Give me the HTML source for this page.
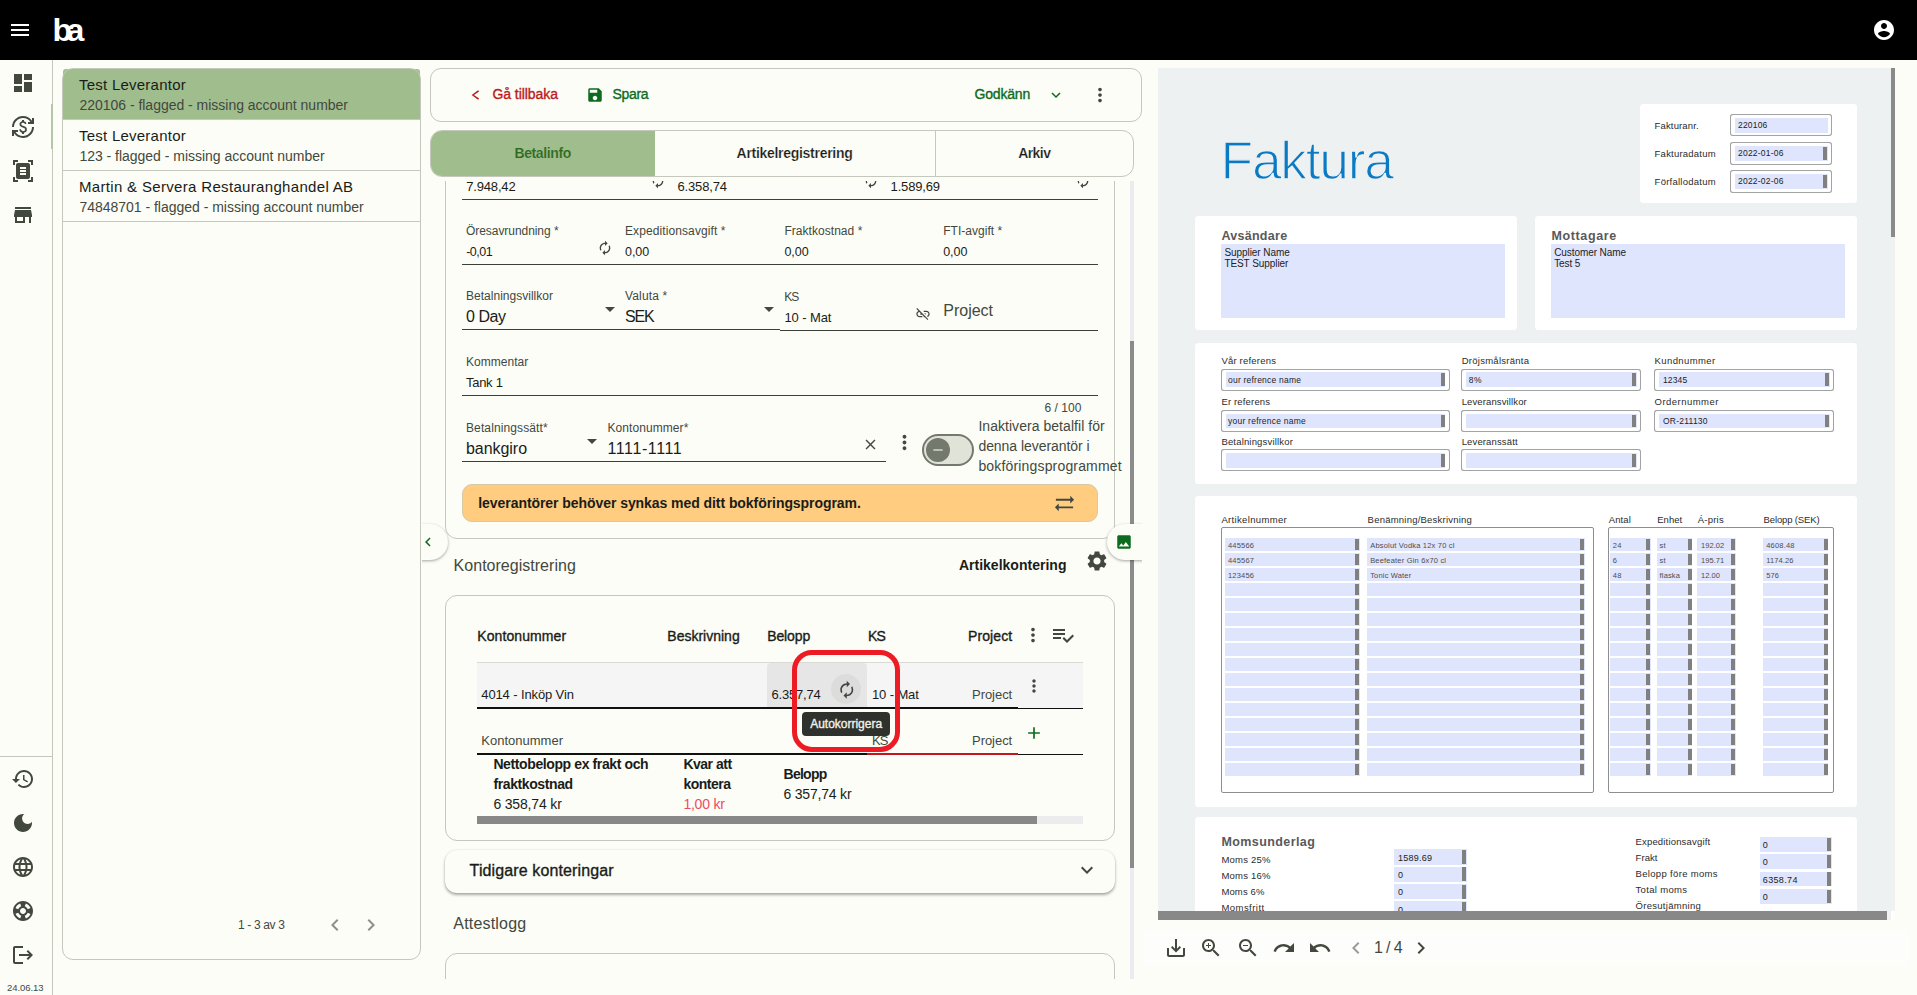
<!DOCTYPE html>
<html lang="sv"><head><meta charset="utf-8"><title>Faktura</title>
<style>
html,body{margin:0;padding:0}
body{width:1917px;height:995px;position:relative;overflow:hidden;background:#fcfdf7;font-family:"Liberation Sans",sans-serif}
body div,body span.t,body svg.i{position:absolute;box-sizing:border-box}
span.t{white-space:nowrap;display:block}
</style></head>
<body>
<div style="left:422px;top:181px;width:720px;height:798px;overflow:hidden"><div style="left:-422px;top:-181px;width:1917px;height:995px">
<div style="left:445px;top:120px;width:670px;height:418.5px;border:1px solid #c5c8bd;border-radius:12px;"></div>
<span class="t" id="t1" style="left:466.2px;top:180.30px;font-size:13px;line-height:13px;color:#1a1c18;letter-spacing:-0.164px;">7.948,42</span>
<span class="t" id="t2" style="left:677.5px;top:180.30px;font-size:13px;line-height:13px;color:#1a1c18;letter-spacing:-0.164px;">6.358,74</span>
<span class="t" id="t3" style="left:890.6px;top:180.30px;font-size:13px;line-height:13px;color:#1a1c18;letter-spacing:-0.164px;">1.589,69</span>
<svg class="i" style="left:650.4px;top:173.3px;" width="16" height="16" viewBox="0 0 24 24"><path fill="#43483e" d="M12 6v3l4-4-4-4v3c-4.42 0-8 3.58-8 8 0 1.57.46 3.03 1.24 4.26L6.7 14.8c-.45-.83-.7-1.79-.7-2.8 0-3.31 2.69-6 6-6zm6.76 1.74L17.3 9.2c.44.84.7 1.79.7 2.8 0 3.31-2.69 6-6 6v-3l-4 4 4 4v-3c4.42 0 8-3.58 8-8 0-1.57-.46-3.03-1.24-4.26z"/></svg>
<svg class="i" style="left:862.5px;top:173.3px;" width="16" height="16" viewBox="0 0 24 24"><path fill="#43483e" d="M12 6v3l4-4-4-4v3c-4.42 0-8 3.58-8 8 0 1.57.46 3.03 1.24 4.26L6.7 14.8c-.45-.83-.7-1.79-.7-2.8 0-3.31 2.69-6 6-6zm6.76 1.74L17.3 9.2c.44.84.7 1.79.7 2.8 0 3.31-2.69 6-6 6v-3l-4 4 4 4v-3c4.42 0 8-3.58 8-8 0-1.57-.46-3.03-1.24-4.26z"/></svg>
<svg class="i" style="left:1074.6px;top:173.3px;" width="16" height="16" viewBox="0 0 24 24"><path fill="#43483e" d="M12 6v3l4-4-4-4v3c-4.42 0-8 3.58-8 8 0 1.57.46 3.03 1.24 4.26L6.7 14.8c-.45-.83-.7-1.79-.7-2.8 0-3.31 2.69-6 6-6zm6.76 1.74L17.3 9.2c.44.84.7 1.79.7 2.8 0 3.31-2.69 6-6 6v-3l-4 4 4 4v-3c4.42 0 8-3.58 8-8 0-1.57-.46-3.03-1.24-4.26z"/></svg>
<div style="left:462px;top:199px;width:636px;height:1px;background:#3c4038;"></div>
<span class="t" id="t4" style="left:466px;top:225.14px;font-size:12px;line-height:12px;color:#43483e;letter-spacing:-0.056px;">Öresavrundning *</span>
<span class="t" id="t5" style="left:625px;top:225.14px;font-size:12px;line-height:12px;color:#43483e;letter-spacing:0.098px;">Expeditionsavgift *</span>
<span class="t" id="t6" style="left:784.4px;top:225.14px;font-size:12px;line-height:12px;color:#43483e;letter-spacing:0.045px;">Fraktkostnad *</span>
<span class="t" id="t7" style="left:943.2px;top:225.14px;font-size:12px;line-height:12px;color:#43483e;letter-spacing:0.026px;">FTI-avgift *</span>
<span class="t" id="t8" style="left:466.2px;top:246.42px;font-size:12.5px;line-height:12.5px;color:#1a1c18;letter-spacing:-0.480px;">-0,01</span>
<span class="t" id="t9" style="left:625px;top:246.42px;font-size:12.5px;line-height:12.5px;color:#1a1c18;letter-spacing:-0.036px;">0,00</span>
<span class="t" id="t10" style="left:784.4px;top:246.42px;font-size:12.5px;line-height:12.5px;color:#1a1c18;letter-spacing:-0.036px;">0,00</span>
<span class="t" id="t11" style="left:943.2px;top:246.42px;font-size:12.5px;line-height:12.5px;color:#1a1c18;letter-spacing:-0.036px;">0,00</span>
<svg class="i" style="left:597.0px;top:240.0px;" width="16" height="16" viewBox="0 0 24 24"><path fill="#43483e" d="M12 6v3l4-4-4-4v3c-4.42 0-8 3.58-8 8 0 1.57.46 3.03 1.24 4.26L6.7 14.8c-.45-.83-.7-1.79-.7-2.8 0-3.31 2.69-6 6-6zm6.76 1.74L17.3 9.2c.44.84.7 1.79.7 2.8 0 3.31-2.69 6-6 6v-3l-4 4 4 4v-3c4.42 0 8-3.58 8-8 0-1.57-.46-3.03-1.24-4.26z"/></svg>
<div style="left:462px;top:264px;width:636px;height:1px;background:#3c4038;"></div>
<span class="t" id="t12" style="left:466px;top:290.14px;font-size:12px;line-height:12px;color:#43483e;letter-spacing:0.017px;">Betalningsvillkor</span>
<span class="t" id="t13" style="left:625px;top:290.14px;font-size:12px;line-height:12px;color:#43483e;letter-spacing:0.145px;">Valuta *</span>
<span class="t" id="t14" style="left:784.3px;top:290.64px;font-size:12px;line-height:12px;color:#43483e;letter-spacing:-1.158px;">KS</span>
<span class="t" id="t15" style="left:466px;top:308.76px;font-size:16px;line-height:16px;color:#1a1c18;letter-spacing:-0.479px;">0 Day</span>
<span class="t" id="t16" style="left:625px;top:308.76px;font-size:16px;line-height:16px;color:#1a1c18;letter-spacing:-1.172px;">SEK</span>
<span class="t" id="t17" style="left:784.4px;top:311.30px;font-size:13px;line-height:13px;color:#1a1c18;letter-spacing:-0.098px;">10 - Mat</span>
<span class="t" id="t18" style="left:943.3px;top:303.36px;font-size:16px;line-height:16px;color:#43483e;letter-spacing:-0.014px;">Project</span>
<svg class="i" style="left:598.0px;top:296.5px;" width="24" height="24" viewBox="0 0 24 24"><path fill="#43483e" d="M7 10l5 5 5-5z"/></svg>
<svg class="i" style="left:756.8px;top:296.5px;" width="24" height="24" viewBox="0 0 24 24"><path fill="#43483e" d="M7 10l5 5 5-5z"/></svg>
<svg class="i" style="left:915.2px;top:305.5px;" width="16" height="16" viewBox="0 0 24 24"><path fill="#43483e" d="M17 7h-4v1.9h4c1.71 0 3.1 1.39 3.1 3.1 0 1.43-.98 2.63-2.31 2.98l1.46 1.46C20.88 15.61 22 13.95 22 12c0-2.76-2.24-5-5-5zm-1 4h-2.19l2 2H16v-2zM2 4.27l3.11 3.11C3.29 8.12 2 9.91 2 12c0 2.76 2.24 5 5 5h4v-1.9H7c-1.71 0-3.1-1.39-3.1-3.1 0-1.59 1.21-2.9 2.76-3.07L8.73 11H8v2h2.73L13 15.27V17h1.73l4.01 4L20 19.74 3.27 3 2 4.27z"/></svg>
<div style="left:462px;top:329px;width:318px;height:1px;background:#3c4038;"></div>
<div style="left:780px;top:330px;width:318px;height:1px;background:#3c4038;"></div>
<span class="t" id="t19" style="left:466px;top:356.04px;font-size:12px;line-height:12px;color:#43483e;letter-spacing:0.030px;">Kommentar</span>
<span class="t" id="t20" style="left:466px;top:376.00px;font-size:13px;line-height:13px;color:#1a1c18;letter-spacing:-0.285px;">Tank 1</span>
<div style="left:462px;top:395px;width:636px;height:1px;background:#3c4038;"></div>
<span class="t" id="t21" style="left:1044.4px;top:402.04px;font-size:12px;line-height:12px;color:#43483e;letter-spacing:0.071px;">6 / 100</span>
<span class="t" id="t22" style="left:466px;top:422.14px;font-size:12px;line-height:12px;color:#43483e;letter-spacing:0.116px;">Betalningssätt*</span>
<span class="t" id="t23" style="left:607.4px;top:422.14px;font-size:12px;line-height:12px;color:#43483e;letter-spacing:0.079px;">Kontonummer*</span>
<span class="t" id="t24" style="left:466px;top:440.86px;font-size:16px;line-height:16px;color:#1a1c18;letter-spacing:-0.047px;">bankgiro</span>
<span class="t" id="t25" style="left:607.4px;top:440.86px;font-size:16px;line-height:16px;color:#1a1c18;letter-spacing:0.623px;">1111-1111</span>
<svg class="i" style="left:580.0px;top:429.0px;" width="24" height="24" viewBox="0 0 24 24"><path fill="#43483e" d="M7 10l5 5 5-5z"/></svg>
<div style="left:462px;top:460.5px;width:424px;height:1px;background:#3c4038;"></div>
<svg class="i" style="left:862.0px;top:436.0px;" width="17" height="17" viewBox="0 0 24 24"><path fill="#43483e" d="M19 6.41L17.59 5 12 10.59 6.41 5 5 6.41 10.59 12 5 17.59 6.41 19 12 13.41 17.59 19 19 17.59 13.41 12z"/></svg>
<svg class="i" style="left:892.5px;top:430.5px;" width="23" height="23" viewBox="0 0 24 24"><path fill="#43483e" d="M12 8c1.1 0 2-.9 2-2s-.9-2-2-2-2 .9-2 2 .9 2 2 2zm0 2c-1.1 0-2 .9-2 2s.9 2 2 2 2-.9 2-2-.9-2-2-2zm0 6c-1.1 0-2 .9-2 2s.9 2 2 2 2-.9 2-2-.9-2-2-2z"/></svg>
<div style="left:922px;top:433.5px;width:52px;height:32px;border:2px solid #74796d;border-radius:16px;background:#e0e4d8;"></div>
<div style="left:926px;top:437.5px;width:24px;height:24px;border-radius:12px;background:#74796d;"></div>
<svg class="i" style="left:930.0px;top:441.5px;" width="16" height="16" viewBox="0 0 24 24"><path fill="#e0e4d8" d="M19 13H5v-2h14v2z"/></svg>
<span class="t" id="t26" style="left:978.4px;top:419.15px;font-size:14px;line-height:14px;color:#43483e;letter-spacing:0.044px;">Inaktivera betalfil för</span>
<span class="t" id="t27" style="left:978.4px;top:439.15px;font-size:14px;line-height:14px;color:#43483e;letter-spacing:-0.049px;">denna leverantör i</span>
<span class="t" id="t28" style="left:978.4px;top:459.15px;font-size:14px;line-height:14px;color:#43483e;letter-spacing:0.167px;">bokföringsprogrammet</span>
<div style="left:462px;top:484px;width:636px;height:37.5px;background:#ffcc80;border-radius:10px;border:1px solid #d8c8a4;"></div>
<span class="t" id="t29" style="left:478.3px;top:496.45px;font-size:14px;line-height:14px;color:#1a1c18;font-weight:700;letter-spacing:-0.062px;">leverantörer behöver synkas med ditt bokföringsprogram.</span>
<svg class="i" style="left:1052.5px;top:491.5px;" width="23" height="23" viewBox="0 0 24 24"><path fill="#43483e" d="M22 8l-4-4v3H3v2h15v3l4-4zM2 16l4 4v-3h15v-2H6v-3l-4 4z"/></svg>
<span class="t" id="t30" style="left:453.6px;top:558.46px;font-size:16px;line-height:16px;color:#43483e;letter-spacing:0.021px;">Kontoregistrering</span>
<span class="t" id="t31" style="left:958.9px;top:558.35px;font-size:14px;line-height:14px;color:#1a1c18;font-weight:700;letter-spacing:0.015px;">Artikelkontering</span>
<svg class="i" style="left:1085.0px;top:549.0px;" width="24" height="24" viewBox="0 0 24 24"><path fill="#43483e" d="M19.14 12.94c.04-.3.06-.61.06-.94 0-.32-.02-.64-.07-.94l2.03-1.58c.18-.14.23-.41.12-.61l-1.92-3.32c-.12-.22-.37-.29-.59-.22l-2.39.96c-.5-.38-1.03-.7-1.62-.94l-.36-2.54c-.04-.24-.24-.41-.48-.41h-3.84c-.24 0-.43.17-.47.41l-.36 2.54c-.59.24-1.13.57-1.62.94l-2.39-.96c-.22-.08-.47 0-.59.22L2.74 8.87c-.12.21-.08.47.12.61l2.03 1.58c-.05.3-.09.63-.09.94s.02.64.07.94l-2.03 1.58c-.18.14-.23.41-.12.61l1.92 3.32c.12.22.37.29.59.22l2.39-.96c.5.38 1.03.7 1.62.94l.36 2.54c.05.24.24.41.48.41h3.84c.24 0 .44-.17.47-.41l.36-2.54c.59-.24 1.13-.56 1.62-.94l2.39.96c.22.08.47 0 .59-.22l1.92-3.32c.12-.22.07-.47-.12-.61l-2.01-1.58zM12 15.6c-1.98 0-3.6-1.62-3.6-3.6s1.62-3.6 3.6-3.6 3.6 1.62 3.6 3.6-1.62 3.6-3.6 3.6z"/></svg>
<div style="left:445px;top:595px;width:670px;height:246px;border:1px solid #c5c8bd;border-radius:12px;"></div>
<span class="t" id="t32" style="left:477.3px;top:628.75px;font-size:14px;line-height:14px;color:#1a1c18;letter-spacing:0.088px;-webkit-text-stroke:0.35px currentColor;">Kontonummer</span>
<span class="t" id="t33" style="left:667.3px;top:628.75px;font-size:14px;line-height:14px;color:#1a1c18;letter-spacing:0.002px;-webkit-text-stroke:0.35px currentColor;">Beskrivning</span>
<span class="t" id="t34" style="left:767.2px;top:628.75px;font-size:14px;line-height:14px;color:#1a1c18;letter-spacing:-0.099px;-webkit-text-stroke:0.35px currentColor;">Belopp</span>
<span class="t" id="t35" style="left:868px;top:628.75px;font-size:14px;line-height:14px;color:#1a1c18;letter-spacing:-0.844px;-webkit-text-stroke:0.35px currentColor;">KS</span>
<span class="t" id="t36" style="left:968px;top:628.75px;font-size:14px;line-height:14px;color:#1a1c18;letter-spacing:0.089px;-webkit-text-stroke:0.35px currentColor;">Project</span>
<svg class="i" style="left:1022.0px;top:624.0px;" width="22" height="22" viewBox="0 0 24 24"><path fill="#43483e" d="M12 8c1.1 0 2-.9 2-2s-.9-2-2-2-2 .9-2 2 .9 2 2 2zm0 2c-1.1 0-2 .9-2 2s.9 2 2 2 2-.9 2-2-.9-2-2-2zm0 6c-1.1 0-2 .9-2 2s.9 2 2 2 2-.9 2-2-.9-2-2-2z"/></svg>
<svg class="i" style="left:1050.7px;top:623.2px;" width="24" height="24" viewBox="0 0 24 24"><path fill="#43483e" d="M14 10H2v2h12v-2zm0-4H2v2h12V6zM2 16h8v-2H2v2zm19.5-4.5L23 13l-6.99 7-4.51-4.5L13 14l3.01 3 5.49-5.5z"/></svg>
<div style="left:477px;top:662px;width:606px;height:1px;background:#d9d9d6;"></div>
<div style="left:477px;top:663px;width:606px;height:44.5px;background:#f5f5f5;"></div>
<div style="left:767px;top:663px;width:100px;height:44.5px;background:#e6e6e6;border-radius:4px 4px 0 0;"></div>
<div style="left:831px;top:674.3px;width:30px;height:30px;background:#dcdcdc;border-radius:15px;"></div>
<svg class="i" style="left:836.55px;top:679.85px;" width="19.5" height="19.5" viewBox="0 0 24 24"><path fill="#43483e" d="M12 6v3l4-4-4-4v3c-4.42 0-8 3.58-8 8 0 1.57.46 3.03 1.24 4.26L6.7 14.8c-.45-.83-.7-1.79-.7-2.8 0-3.31 2.69-6 6-6zm6.76 1.74L17.3 9.2c.44.84.7 1.79.7 2.8 0 3.31-2.69 6-6 6v-3l-4 4 4 4v-3c4.42 0 8-3.58 8-8 0-1.57-.46-3.03-1.24-4.26z"/></svg>
<span class="t" id="t37" style="left:481.3px;top:688.30px;font-size:13px;line-height:13px;color:#1a1c18;letter-spacing:-0.122px;">4014 - Inköp Vin</span>
<span class="t" id="t38" style="left:771.4px;top:688.30px;font-size:13px;line-height:13px;color:#1a1c18;letter-spacing:-0.164px;">6.357,74</span>
<span class="t" id="t39" style="left:872px;top:688.30px;font-size:13px;line-height:13px;color:#1a1c18;letter-spacing:-0.123px;">10 - Mat</span>
<span class="t" id="t40" style="left:972px;top:688.30px;font-size:13px;line-height:13px;color:#43483e;letter-spacing:-0.038px;">Project</span>
<svg class="i" style="left:1023.7px;top:676.0px;" width="20" height="20" viewBox="0 0 24 24"><path fill="#43483e" d="M12 8c1.1 0 2-.9 2-2s-.9-2-2-2-2 .9-2 2 .9 2 2 2zm0 2c-1.1 0-2 .9-2 2s.9 2 2 2 2-.9 2-2-.9-2-2-2zm0 6c-1.1 0-2 .9-2 2s.9 2 2 2 2-.9 2-2-.9-2-2-2z"/></svg>
<div style="left:477px;top:707.3px;width:541px;height:2px;background:#111;"></div>
<div style="left:1018px;top:708.3px;width:65px;height:1px;background:#111;"></div>
<span class="t" id="t41" style="left:481.3px;top:734.00px;font-size:13px;line-height:13px;color:#43483e;letter-spacing:0.004px;">Kontonummer</span>
<span class="t" id="t42" style="left:872px;top:734.00px;font-size:13px;line-height:13px;color:#43483e;letter-spacing:-0.822px;">KS</span>
<span class="t" id="t43" style="left:972px;top:734.00px;font-size:13px;line-height:13px;color:#43483e;letter-spacing:-0.038px;">Project</span>
<svg class="i" style="left:1023.7px;top:722.5px;" width="20" height="20" viewBox="0 0 24 24"><path fill="#0c6b1e" d="M19 13h-6v6h-2v-6H5v-2h6V5h2v6h6v2z"/></svg>
<div style="left:477px;top:753.3px;width:390px;height:2px;background:#111;"></div>
<div style="left:867px;top:753.3px;width:151px;height:2px;background:#c4161c;"></div>
<div style="left:1018px;top:754.3px;width:65px;height:1px;background:#111;"></div>
<span class="t" id="t44" style="left:493.4px;top:756.85px;font-size:14px;line-height:14px;color:#1a1c18;font-weight:700;letter-spacing:-0.389px;">Nettobelopp ex frakt och</span>
<span class="t" id="t45" style="left:493.4px;top:776.65px;font-size:14px;line-height:14px;color:#1a1c18;font-weight:700;letter-spacing:-0.386px;">fraktkostnad</span>
<span class="t" id="t46" style="left:493.4px;top:797.05px;font-size:14px;line-height:14px;color:#1a1c18;letter-spacing:-0.160px;">6 358,74 kr</span>
<span class="t" id="t47" style="left:683.4px;top:756.85px;font-size:14px;line-height:14px;color:#1a1c18;font-weight:700;letter-spacing:-0.493px;">Kvar att</span>
<span class="t" id="t48" style="left:683.4px;top:776.65px;font-size:14px;line-height:14px;color:#1a1c18;font-weight:700;letter-spacing:-0.483px;">kontera</span>
<span class="t" id="t49" style="left:683.4px;top:797.05px;font-size:14px;line-height:14px;color:#ee4b64;letter-spacing:-0.230px;">1,00 kr</span>
<span class="t" id="t50" style="left:783.5px;top:766.85px;font-size:14px;line-height:14px;color:#1a1c18;font-weight:700;letter-spacing:-0.726px;">Belopp</span>
<span class="t" id="t51" style="left:783.4px;top:786.95px;font-size:14px;line-height:14px;color:#1a1c18;letter-spacing:-0.188px;">6 357,74 kr</span>
<div style="left:477px;top:815.5px;width:606px;height:8px;background:#ececef;"></div>
<div style="left:477px;top:815.5px;width:560px;height:8px;background:#888;"></div>
<div style="left:802px;top:712px;width:88px;height:24px;background:#2f312c;border-radius:4px;"></div>
<span class="t" id="t52" style="left:810.2px;top:717.84px;font-size:12px;line-height:12px;color:#f1f1ea;letter-spacing:-0.011px;-webkit-text-stroke:0.35px currentColor;">Autokorrigera</span>
<div style="left:792px;top:649.8px;width:108px;height:102.6px;border:5.2px solid #ed1c24;border-radius:20px;"></div>
<div style="left:445px;top:849.5px;width:670px;height:43.5px;border-radius:12px;background:#fcfdf7;box-shadow:0 2px 3px rgba(0,0,0,.32),0 0 2px rgba(0,0,0,.12);"></div>
<span class="t" id="t53" style="left:469.6px;top:862.56px;font-size:16px;line-height:16px;color:#1a1c18;letter-spacing:0.120px;-webkit-text-stroke:0.35px currentColor;">Tidigare konteringar</span>
<svg class="i" style="left:1075.0px;top:858.0px;" width="24" height="24" viewBox="0 0 24 24"><path fill="#43483e" d="M16.59 8.59L12 13.17 7.41 8.59 6 10l6 6 6-6z"/></svg>
<span class="t" id="t54" style="left:453.3px;top:915.66px;font-size:16px;line-height:16px;color:#43483e;letter-spacing:0.194px;">Attestlogg</span>
<div style="left:445px;top:952.7px;width:670px;height:80px;border:1px solid #c5c8bd;border-radius:12px;"></div>
<div style="left:1130px;top:176px;width:4px;height:803px;background:#ebebf0;"></div>
<div style="left:1130px;top:340.5px;width:4px;height:527.5px;background:#8b8b8b;"></div>
<div style="left:400px;top:523.8px;width:47.7px;height:36.5px;border-radius:0 18.2px 18.2px 0;background:#fcfdf7;box-shadow:0 1px 3px rgba(0,0,0,.35);"></div>
<svg class="i" style="left:418.5px;top:533.0px;" width="18" height="18" viewBox="0 0 24 24"><path fill="#0c6b1e" d="M15.41 7.41L14 6l-6 6 6 6 1.41-1.41L10.83 12z"/></svg>
<div style="left:1106.9px;top:523.8px;width:50px;height:36.5px;border-radius:18.2px 0 0 18.2px;background:#fcfdf7;box-shadow:0 1px 3px rgba(0,0,0,.35);"></div>
<svg class="i" style="left:1115.2px;top:533.0px;" width="18" height="18" viewBox="0 0 24 24"><path fill="#0c6b1e" d="M21 19V5c0-1.1-.9-2-2-2H5c-1.1 0-2 .9-2 2v14c0 1.1.9 2 2 2h14c1.1 0 2-.9 2-2zM8.5 13.5l2.5 3.01L14.5 12l4.5 6H5l3.5-4.5z"/></svg>
</div></div>
<div style="left:430px;top:68px;width:712px;height:54px;border:1px solid #c5c8bd;border-radius:11px;background:#fcfdf7;"></div>
<svg class="i" style="left:466.6px;top:87.0px;" width="16" height="16" viewBox="0 0 24 24"><path fill="#ba1a1a" d="M16.6 5L18.2 6.6 10.4 12l7.8 5.4-1.6 1.6L7 12z"/></svg>
<span class="t" id="t55" style="left:492.4px;top:86.95px;font-size:14px;line-height:14px;color:#ba1a1a;letter-spacing:-0.051px;-webkit-text-stroke:0.35px currentColor;">Gå tillbaka</span>
<svg class="i" style="left:586.4px;top:86.0px;" width="18" height="18" viewBox="0 0 24 24"><path fill="#0c6b1e" d="M17 3H5c-1.11 0-2 .9-2 2v14c0 1.1.89 2 2 2h14c1.1 0 2-.9 2-2V7l-4-4zm-5 16c-1.66 0-3-1.34-3-3s1.34-3 3-3 3 1.34 3 3-1.34 3-3 3zm3-10H5V5h10v4z"/></svg>
<span class="t" id="t56" style="left:612.6px;top:86.95px;font-size:14px;line-height:14px;color:#0c6b1e;letter-spacing:-0.352px;-webkit-text-stroke:0.35px currentColor;">Spara</span>
<span class="t" id="t57" style="left:974.6px;top:86.95px;font-size:14px;line-height:14px;color:#0c6b1e;letter-spacing:-0.204px;-webkit-text-stroke:0.35px currentColor;">Godkänn</span>
<svg class="i" style="left:1047.0px;top:86.0px;" width="18" height="18" viewBox="0 0 24 24"><path fill="#0c6b1e" d="M16.59 8.59L12 13.17 7.41 8.59 6 10l6 6 6-6z"/></svg>
<svg class="i" style="left:1089.0px;top:84.0px;" width="22" height="22" viewBox="0 0 24 24"><path fill="#43483e" d="M12 8c1.1 0 2-.9 2-2s-.9-2-2-2-2 .9-2 2 .9 2 2 2zm0 2c-1.1 0-2 .9-2 2s.9 2 2 2 2-.9 2-2-.9-2-2-2zm0 6c-1.1 0-2 .9-2 2s.9 2 2 2 2-.9 2-2-.9-2-2-2z"/></svg>
<div style="left:430px;top:130px;width:704px;height:46.5px;border:1px solid #c5c8bd;border-radius:12px;background:#fcfdf7;overflow:hidden;"><div style="left:-1px;top:-1px;width:224.5px;height:47px;background:#a0bd8e"></div><div style="left:503.5px;top:0;width:1px;height:47px;background:#c5c8bd"></div></div>
<span class="t" id="t58" style="left:514.5px;top:146.15px;font-size:14px;line-height:14px;color:#2c6a1c;font-weight:700;letter-spacing:-0.399px;-webkit-text-stroke:0.2px #a0bd8e;">Betalinfo</span>
<span class="t" id="t59" style="left:736.6px;top:146.15px;font-size:14px;line-height:14px;color:#1a1c18;font-weight:700;letter-spacing:-0.293px;-webkit-text-stroke:0.2px #fcfdf7;">Artikelregistrering</span>
<span class="t" id="t60" style="left:1018.2px;top:146.15px;font-size:14px;line-height:14px;color:#1a1c18;font-weight:700;letter-spacing:-0.566px;-webkit-text-stroke:0.2px #fcfdf7;">Arkiv</span>
<div style="left:62px;top:68px;width:359px;height:892px;border-radius:11px;background:#fcfdf7;"></div>
<div style="left:63px;top:69px;width:357px;height:50px;background:#a0bd8e;border-radius:3px 3px 0 0;"></div>
<div style="left:63px;top:119px;width:357px;height:1px;background:#c5c8bd;"></div>
<div style="left:63px;top:170px;width:357px;height:1px;background:#c5c8bd;"></div>
<div style="left:63px;top:221px;width:357px;height:1px;background:#c5c8bd;"></div>
<div style="left:62px;top:68px;width:359px;height:892px;border:1px solid #c5c8bd;border-radius:11px;"></div>
<span class="t" id="t61" style="left:79px;top:77.30px;font-size:15px;line-height:15px;color:#1a1c18;letter-spacing:0.241px;">Test Leverantor</span>
<span class="t" id="t62" style="left:79.4px;top:97.85px;font-size:14px;line-height:14px;color:#43483e;letter-spacing:-0.017px;">220106 - flagged - missing account number</span>
<span class="t" id="t63" style="left:79px;top:128.30px;font-size:15px;line-height:15px;color:#1a1c18;letter-spacing:0.241px;">Test Leverantor</span>
<span class="t" id="t64" style="left:79.4px;top:148.85px;font-size:14px;line-height:14px;color:#43483e;letter-spacing:-0.019px;">123 - flagged - missing account number</span>
<span class="t" id="t65" style="left:79px;top:179.30px;font-size:15px;line-height:15px;color:#1a1c18;letter-spacing:0.326px;">Martin &amp; Servera Restauranghandel AB</span>
<span class="t" id="t66" style="left:79.4px;top:199.95px;font-size:14px;line-height:14px;color:#43483e;letter-spacing:-0.015px;">74848701 - flagged - missing account number</span>
<span class="t" id="t67" style="left:238px;top:918.84px;font-size:12px;line-height:12px;color:#43483e;letter-spacing:-0.343px;">1 - 3 av 3</span>
<svg class="i" style="left:323.0px;top:913.0px;" width="24" height="24" viewBox="0 0 24 24"><path fill="#8d9088" d="M15.41 7.41L14 6l-6 6 6 6 1.41-1.41L10.83 12z"/></svg>
<svg class="i" style="left:359.0px;top:913.0px;" width="24" height="24" viewBox="0 0 24 24"><path fill="#8d9088" d="M10 6L8.59 7.41 13.17 12l-4.58 4.59L10 18l6-6z"/></svg>
<div style="left:0px;top:60px;width:53px;height:935px;border-right:1px solid #c5c8bd;background:#fcfdf7;"></div>
<div style="left:51px;top:104px;width:2px;height:45px;background:#b5c7aa;"></div>
<svg class="i" style="left:11.0px;top:71.0px;" width="24" height="24" viewBox="0 0 24 24"><path fill="#43483e" d="M3 13h8V3H3v10zm0 8h8v-6H3v6zm10 0h8V11h-8v10zm0-18v6h8V3h-8z"/></svg>
<svg class="i" style="left:11.0px;top:115.0px;" width="24" height="24" viewBox="0 0 24 24"><path fill="#43483e" d="M12.89 11.1c-1.78-.59-2.64-.96-2.64-1.9 0-1.02 1.11-1.39 1.81-1.39 1.31 0 1.79.99 1.9 1.34l1.58-.67c-.15-.45-.82-1.92-2.54-2.24V5h-2v1.26c-2.48.56-2.49 2.86-2.49 2.96 0 2.27 2.25 2.91 3.35 3.31 1.58.56 2.28 1.07 2.28 2.03 0 1.13-1.05 1.61-1.98 1.61-1.82 0-2.34-1.87-2.4-2.09l-1.66.67c.63 2.19 2.28 2.78 2.9 2.96V19h2v-1.24c.4-.09 2.9-.59 2.9-3.22 0-1.39-.61-2.61-3.01-3.44zM3 21H1v-6h6v2H4.52c1.61 2.41 4.36 4 7.48 4 4.97 0 9-4.03 9-9h2c0 6.08-4.92 11-11 11-3.72 0-7.01-1.85-9-4.67V21zm-2-9C1 5.92 5.92 1 12 1c3.72 0 7.01 1.85 9 4.67V3h2v6h-6V7h2.48C17.87 4.59 15.12 3 12 3c-4.97 0-9 4.03-9 9H1z"/></svg>
<svg class="i" style="left:11.0px;top:159.0px;" width="24" height="24" viewBox="0 0 24 24"><path fill="#43483e" d="M7 3H4v3H2V1h5v2zm15 3V1h-5v2h3v3h2zM7 21H4v-3H2v5h5v-2zm13-3v3h-3v2h5v-5h-2zM19 18c0 1.1-.9 2-2 2H7c-1.1 0-2-.9-2-2V6c0-1.1.9-2 2-2h10c1.1 0 2 .9 2 2v12zM15 8H9v2h6V8zm0 3H9v2h6v-2zm0 3H9v2h6v-2z"/></svg>
<svg class="i" style="left:11.0px;top:203.0px;" width="24" height="24" viewBox="0 0 24 24"><path fill="#43483e" d="M20 4H4v2h16V4zm1 10v-2l-1-5H4l-1 5v2h1v6h10v-6h4v6h2v-6h1zm-9 4H6v-4h6v4z"/></svg>
<div style="left:0px;top:755.7px;width:52px;height:1px;background:#c5c8bd;"></div>
<svg class="i" style="left:11.0px;top:767.0px;" width="24" height="24" viewBox="0 0 24 24"><path fill="#43483e" d="M13 3c-4.97 0-9 4.03-9 9H1l3.89 3.89.07.14L9 12H6c0-3.87 3.13-7 7-7s7 3.13 7 7-3.13 7-7 7c-1.93 0-3.68-.79-4.94-2.06l-1.42 1.42C8.27 19.99 10.51 21 13 21c4.97 0 9-4.03 9-9s-4.03-9-9-9zm-1 5v5l4.28 2.54.72-1.21-3.5-2.08V8H12z"/></svg>
<svg class="i" style="left:11.0px;top:811.0px;" width="24" height="24" viewBox="0 0 24 24"><path fill="#43483e" d="M12 3c-4.97 0-9 4.03-9 9s4.03 9 9 9 9-4.03 9-9c0-.46-.04-.92-.1-1.36-.98 1.37-2.58 2.26-4.4 2.26-2.98 0-5.4-2.42-5.4-5.4 0-1.81.89-3.42 2.26-4.4-.44-.06-.9-.1-1.36-.1z"/></svg>
<svg class="i" style="left:11.0px;top:855.0px;" width="24" height="24" viewBox="0 0 24 24"><path fill="#43483e" d="M11.99 2C6.47 2 2 6.48 2 12s4.47 10 9.99 10C17.52 22 22 17.52 22 12S17.52 2 11.99 2zm6.93 6h-2.95c-.32-1.25-.78-2.45-1.38-3.56 1.84.63 3.37 1.91 4.33 3.56zM12 4.04c.83 1.2 1.48 2.53 1.91 3.96h-3.82c.43-1.43 1.08-2.76 1.91-3.96zM4.26 14C4.1 13.36 4 12.69 4 12s.1-1.36.26-2h3.38c-.08.66-.14 1.32-.14 2 0 .68.06 1.34.14 2H4.26zm.82 2h2.95c.32 1.25.78 2.45 1.38 3.56-1.84-.63-3.37-1.9-4.33-3.56zm2.95-8H5.08c.96-1.66 2.49-2.93 4.33-3.56C8.81 5.55 8.35 6.75 8.03 8zM12 19.96c-.83-1.2-1.48-2.53-1.91-3.96h3.82c-.43 1.43-1.08 2.76-1.91 3.96zM14.34 14H9.66c-.09-.66-.16-1.32-.16-2 0-.68.07-1.35.16-2h4.68c.09.65.16 1.32.16 2 0 .68-.07 1.34-.16 2zm.25 5.56c.6-1.11 1.06-2.31 1.38-3.56h2.95c-.96 1.65-2.49 2.93-4.33 3.56zM16.36 14c.08-.66.14-1.32.14-2 0-.68-.06-1.34-.14-2h3.38c.16.64.26 1.31.26 2s-.1 1.36-.26 2h-3.38z"/></svg>
<svg class="i" style="left:11.0px;top:899.0px;" width="24" height="24" viewBox="0 0 24 24"><path fill="#43483e" d="M12 2C6.48 2 2 6.48 2 12s4.48 10 10 10 10-4.48 10-10S17.52 2 12 2zm7.46 7.12l-2.78 1.15c-.51-1.36-1.58-2.44-2.95-2.94l1.15-2.78c2.1.8 3.77 2.47 4.58 4.57zM12 15c-1.66 0-3-1.34-3-3s1.34-3 3-3 3 1.34 3 3-1.34 3-3 3zM9.13 4.54l1.17 2.78c-1.38.5-2.47 1.59-2.98 2.97L4.54 9.13c.81-2.11 2.48-3.78 4.59-4.59zM4.54 14.87l2.78-1.15c.51 1.38 1.59 2.46 2.97 2.96l-1.17 2.78c-2.1-.81-3.77-2.48-4.58-4.59zm10.34 4.59l-1.15-2.78c1.37-.51 2.45-1.59 2.95-2.97l2.78 1.17c-.81 2.1-2.48 3.77-4.58 4.58z"/></svg>
<svg class="i" style="left:11.0px;top:943.0px;" width="24" height="24" viewBox="0 0 24 24"><path fill="#43483e" d="M17 7l-1.41 1.41L18.17 11H8v2h10.17l-2.58 2.58L17 17l5-5zM4 5h8V3H4c-1.1 0-2 .9-2 2v14c0 1.1.9 2 2 2h8v-2H4V5z"/></svg>
<span class="t" id="t68" style="left:7px;top:983.36px;font-size:9.5px;line-height:9.5px;color:#43483e;letter-spacing:-0.048px;">24.06.13</span>
<div style="left:0px;top:0px;width:1917px;height:60px;background:#000;"></div>
<svg class="i" style="left:8.0px;top:18.0px;" width="24" height="24" viewBox="0 0 24 24"><path fill="#fff" d="M3 18h18v-2H3v2zm0-5h18v-2H3v2zm0-7v2h18V6H3z"/></svg>
<span class="t" id="t69" style="left:52.6px;top:13.91px;font-size:32px;line-height:32px;color:#fff;font-weight:700;">b</span>
<span class="t" id="t70" style="left:66.6px;top:13.91px;font-size:32px;line-height:32px;color:#fff;font-weight:700;">a</span>
<svg class="i" style="left:1872.0px;top:18.0px;" width="24" height="24" viewBox="0 0 24 24"><path fill="#fff" d="M12 2C6.48 2 2 6.48 2 12s4.48 10 10 10 10-4.48 10-10S17.52 2 12 2zm0 3c1.66 0 3 1.34 3 3s-1.34 3-3 3-3-1.34-3-3 1.34-3 3-3zm0 14.2c-2.5 0-4.71-1.28-6-3.22.03-1.99 4-3.08 6-3.08 1.99 0 5.97 1.09 6 3.08-1.29 1.94-3.5 3.22-6 3.22z"/></svg>
<div style="left:1158px;top:68px;width:737px;height:843px;overflow:hidden;background:#eef1f2"><div style="left:-1158px;top:-68px;width:1917px;height:995px">
<span class="t" id="t71" style="left:1220.6px;top:134.11px;font-size:53.5px;line-height:53.5px;color:#0b7ac5;letter-spacing:-1.339px;-webkit-text-stroke:1.4px #eef1f2;">Faktura</span>
<div style="left:1639.5px;top:104px;width:217.6px;height:99.3px;background:#fff;border-radius:3.5px;"></div>
<span class="t" id="t72" style="left:1654.6px;top:120.96px;font-size:9.5px;line-height:9.5px;color:#2b2b2b;letter-spacing:0.142px;">Fakturanr.</span>
<span class="t" id="t73" style="left:1654.6px;top:149.06px;font-size:9.5px;line-height:9.5px;color:#2b2b2b;letter-spacing:0.223px;">Fakturadatum</span>
<span class="t" id="t74" style="left:1654.6px;top:177.16px;font-size:9.5px;line-height:9.5px;color:#2b2b2b;letter-spacing:0.247px;">Förfallodatum</span>
<div style="left:1730.4px;top:114px;width:101.7px;height:22.4px;border:1px solid #a3a3a3;border-radius:3px;background:#fff;box-shadow:0 0 0.5px #999;"></div>
<div style="left:1734.9px;top:117.8px;width:92.9px;height:14.999999999999998px;background:#dfe5fd;"></div>
<div style="left:1730.4px;top:142.2px;width:101.7px;height:22.4px;border:1px solid #a3a3a3;border-radius:3px;background:#fff;box-shadow:0 0 0.5px #999;"></div>
<div style="left:1734.9px;top:146.0px;width:92.9px;height:14.999999999999998px;background:#dfe5fd;"></div>
<div style="left:1823.4px;top:147.0px;width:4px;height:12.999999999999998px;background:#808080;"></div>
<div style="left:1730.4px;top:170.3px;width:101.7px;height:22.4px;border:1px solid #a3a3a3;border-radius:3px;background:#fff;box-shadow:0 0 0.5px #999;"></div>
<div style="left:1734.9px;top:174.10000000000002px;width:92.9px;height:14.999999999999998px;background:#dfe5fd;"></div>
<div style="left:1823.4px;top:175.10000000000002px;width:4px;height:12.999999999999998px;background:#808080;"></div>
<span class="t" id="t75" style="left:1738px;top:121.00px;font-size:8.5px;line-height:8.5px;color:#222;letter-spacing:0.188px;">220106</span>
<span class="t" id="t76" style="left:1738px;top:149.20px;font-size:8.5px;line-height:8.5px;color:#222;letter-spacing:0.212px;">2022-01-06</span>
<span class="t" id="t77" style="left:1738px;top:177.30px;font-size:8.5px;line-height:8.5px;color:#222;letter-spacing:0.212px;">2022-02-06</span>
<div style="left:1195.3px;top:216px;width:322.1px;height:114.3px;background:#fff;border-radius:3.5px;"></div>
<span class="t" id="t78" style="left:1221.4px;top:229.62px;font-size:12.5px;line-height:12.5px;color:#595959;font-weight:700;letter-spacing:0.281px;">Avsändare</span>
<div style="left:1221px;top:243.8px;width:284px;height:74.2px;background:#dfe5fd;"></div>
<span class="t" id="t79" style="left:1224.4px;top:247.84px;font-size:10px;line-height:10px;color:#222;letter-spacing:-0.066px;">Supplier Name</span>
<span class="t" id="t80" style="left:1224.4px;top:258.84px;font-size:10px;line-height:10px;color:#222;letter-spacing:-0.073px;">TEST Supplier</span>
<div style="left:1534.8px;top:216px;width:322.1px;height:114.3px;background:#fff;border-radius:3.5px;"></div>
<span class="t" id="t81" style="left:1551.5px;top:229.62px;font-size:12.5px;line-height:12.5px;color:#595959;font-weight:700;letter-spacing:0.618px;">Mottagare</span>
<div style="left:1551px;top:243.8px;width:294px;height:74.2px;background:#dfe5fd;"></div>
<span class="t" id="t82" style="left:1554.2px;top:247.84px;font-size:10px;line-height:10px;color:#222;letter-spacing:-0.078px;">Customer Name</span>
<span class="t" id="t83" style="left:1554.2px;top:258.84px;font-size:10px;line-height:10px;color:#222;letter-spacing:-0.115px;">Test 5</span>
<div style="left:1195.3px;top:343px;width:661.6px;height:141px;background:#fff;border-radius:3.5px;"></div>
<span class="t" id="t84" style="left:1221.4px;top:355.96px;font-size:9.5px;line-height:9.5px;color:#2b2b2b;letter-spacing:0.202px;">Vår referens</span>
<span class="t" id="t85" style="left:1221.4px;top:397.16px;font-size:9.5px;line-height:9.5px;color:#2b2b2b;letter-spacing:0.164px;">Er referens</span>
<span class="t" id="t86" style="left:1221.4px;top:436.66px;font-size:9.5px;line-height:9.5px;color:#2b2b2b;letter-spacing:0.173px;">Betalningsvillkor</span>
<span class="t" id="t87" style="left:1461.7px;top:355.96px;font-size:9.5px;line-height:9.5px;color:#2b2b2b;letter-spacing:0.265px;">Dröjsmålsränta</span>
<span class="t" id="t88" style="left:1461.7px;top:397.16px;font-size:9.5px;line-height:9.5px;color:#2b2b2b;letter-spacing:0.122px;">Leveransvillkor</span>
<span class="t" id="t89" style="left:1461.7px;top:436.66px;font-size:9.5px;line-height:9.5px;color:#2b2b2b;letter-spacing:0.133px;">Leveranssätt</span>
<span class="t" id="t90" style="left:1654.6px;top:355.96px;font-size:9.5px;line-height:9.5px;color:#2b2b2b;letter-spacing:0.387px;">Kundnummer</span>
<span class="t" id="t91" style="left:1654.6px;top:397.16px;font-size:9.5px;line-height:9.5px;color:#2b2b2b;letter-spacing:0.470px;">Ordernummer</span>
<div style="left:1221px;top:368.5px;width:228.6px;height:22px;border:1px solid #a3a3a3;border-radius:3px;background:#fff;box-shadow:0 0 0.5px #999;"></div>
<div style="left:1225.5px;top:372.3px;width:219.79999999999998px;height:14.6px;background:#dfe5fd;"></div>
<div style="left:1440.8999999999999px;top:373.3px;width:4px;height:12.6px;background:#808080;"></div>
<div style="left:1461px;top:368.5px;width:180px;height:22px;border:1px solid #a3a3a3;border-radius:3px;background:#fff;box-shadow:0 0 0.5px #999;"></div>
<div style="left:1465.5px;top:372.3px;width:171.2px;height:14.6px;background:#dfe5fd;"></div>
<div style="left:1632.3px;top:373.3px;width:4px;height:12.6px;background:#808080;"></div>
<div style="left:1221px;top:410px;width:228.6px;height:22px;border:1px solid #a3a3a3;border-radius:3px;background:#fff;box-shadow:0 0 0.5px #999;"></div>
<div style="left:1225.5px;top:413.8px;width:219.79999999999998px;height:14.6px;background:#dfe5fd;"></div>
<div style="left:1440.8999999999999px;top:414.8px;width:4px;height:12.6px;background:#808080;"></div>
<div style="left:1461px;top:410px;width:180px;height:22px;border:1px solid #a3a3a3;border-radius:3px;background:#fff;box-shadow:0 0 0.5px #999;"></div>
<div style="left:1465.5px;top:413.8px;width:171.2px;height:14.6px;background:#dfe5fd;"></div>
<div style="left:1632.3px;top:414.8px;width:4px;height:12.6px;background:#808080;"></div>
<div style="left:1221px;top:449.2px;width:228.6px;height:22px;border:1px solid #a3a3a3;border-radius:3px;background:#fff;box-shadow:0 0 0.5px #999;"></div>
<div style="left:1225.5px;top:453.0px;width:219.79999999999998px;height:14.6px;background:#dfe5fd;"></div>
<div style="left:1440.8999999999999px;top:454.0px;width:4px;height:12.6px;background:#808080;"></div>
<div style="left:1461px;top:449.2px;width:180px;height:22px;border:1px solid #a3a3a3;border-radius:3px;background:#fff;box-shadow:0 0 0.5px #999;"></div>
<div style="left:1465.5px;top:453.0px;width:171.2px;height:14.6px;background:#dfe5fd;"></div>
<div style="left:1632.3px;top:454.0px;width:4px;height:12.6px;background:#808080;"></div>
<div style="left:1654.2px;top:368.5px;width:179.8px;height:22px;border:1px solid #a3a3a3;border-radius:3px;background:#fff;box-shadow:0 0 0.5px #999;"></div>
<div style="left:1658.7px;top:372.3px;width:171.0px;height:14.6px;background:#dfe5fd;"></div>
<div style="left:1825.3px;top:373.3px;width:4px;height:12.6px;background:#808080;"></div>
<div style="left:1654.2px;top:410px;width:179.8px;height:22px;border:1px solid #a3a3a3;border-radius:3px;background:#fff;box-shadow:0 0 0.5px #999;"></div>
<div style="left:1658.7px;top:413.8px;width:171.0px;height:14.6px;background:#dfe5fd;"></div>
<div style="left:1825.3px;top:414.8px;width:4px;height:12.6px;background:#808080;"></div>
<span class="t" id="t92" style="left:1228px;top:375.80px;font-size:8.5px;line-height:8.5px;color:#222;letter-spacing:0.220px;">our refrence name</span>
<span class="t" id="t93" style="left:1228px;top:417.30px;font-size:8.5px;line-height:8.5px;color:#222;letter-spacing:0.239px;">your refrence name</span>
<span class="t" id="t94" style="left:1468.8px;top:375.80px;font-size:8.5px;line-height:8.5px;color:#222;letter-spacing:0.452px;">8%</span>
<span class="t" id="t95" style="left:1663px;top:375.80px;font-size:8.5px;line-height:8.5px;color:#222;letter-spacing:0.132px;">12345</span>
<span class="t" id="t96" style="left:1663px;top:417.30px;font-size:8.5px;line-height:8.5px;color:#222;letter-spacing:0.235px;">OR-211130</span>
<div style="left:1195.3px;top:496px;width:662px;height:310.7px;background:#fff;border-radius:3.5px;"></div>
<span class="t" id="t97" style="left:1221.4px;top:514.96px;font-size:9.5px;line-height:9.5px;color:#2b2b2b;letter-spacing:0.342px;">Artikelnummer</span>
<span class="t" id="t98" style="left:1367.6px;top:514.96px;font-size:9.5px;line-height:9.5px;color:#2b2b2b;letter-spacing:0.223px;">Benämning/Beskrivning</span>
<span class="t" id="t99" style="left:1608.8px;top:514.96px;font-size:9.5px;line-height:9.5px;color:#2b2b2b;letter-spacing:0.089px;">Antal</span>
<span class="t" id="t100" style="left:1657.2px;top:514.96px;font-size:9.5px;line-height:9.5px;color:#2b2b2b;letter-spacing:0.054px;">Enhet</span>
<span class="t" id="t101" style="left:1697.8px;top:514.96px;font-size:9.5px;line-height:9.5px;color:#2b2b2b;letter-spacing:0.215px;">Á-pris</span>
<span class="t" id="t102" style="left:1763.6px;top:514.96px;font-size:9.5px;line-height:9.5px;color:#2b2b2b;letter-spacing:-0.139px;">Belopp (SEK)</span>
<div style="left:1221px;top:527.2px;width:372.5px;height:265.6px;border:1px solid #8e8e8e;border-radius:2px;"></div>
<div style="left:1608.4px;top:527.2px;width:225.8px;height:265.6px;border:1px solid #8e8e8e;border-radius:2px;"></div>
<div style="left:1225px;top:538.3px;width:134.5px;height:12.5px;background:#dfe5fd;"></div>
<div style="left:1354.9px;top:538.9px;width:4px;height:11.3px;background:#808080;"></div>
<div style="left:1367.2px;top:538.3px;width:217.39999999999986px;height:12.5px;background:#dfe5fd;"></div>
<div style="left:1580.0px;top:538.9px;width:4px;height:11.3px;background:#808080;"></div>
<div style="left:1610px;top:538.3px;width:40.59999999999991px;height:12.5px;background:#dfe5fd;"></div>
<div style="left:1646.0px;top:538.9px;width:4px;height:11.3px;background:#808080;"></div>
<div style="left:1657px;top:538.3px;width:35.40000000000009px;height:12.5px;background:#dfe5fd;"></div>
<div style="left:1687.8000000000002px;top:538.9px;width:4px;height:11.3px;background:#808080;"></div>
<div style="left:1697.2px;top:538.3px;width:38.399999999999864px;height:12.5px;background:#dfe5fd;"></div>
<div style="left:1731.0px;top:538.9px;width:4px;height:11.3px;background:#808080;"></div>
<div style="left:1763.2px;top:538.3px;width:65.29999999999995px;height:12.5px;background:#dfe5fd;"></div>
<div style="left:1823.9px;top:538.9px;width:4px;height:11.3px;background:#808080;"></div>
<div style="left:1225px;top:553.3px;width:134.5px;height:12.5px;background:#dfe5fd;"></div>
<div style="left:1354.9px;top:553.9px;width:4px;height:11.3px;background:#808080;"></div>
<div style="left:1367.2px;top:553.3px;width:217.39999999999986px;height:12.5px;background:#dfe5fd;"></div>
<div style="left:1580.0px;top:553.9px;width:4px;height:11.3px;background:#808080;"></div>
<div style="left:1610px;top:553.3px;width:40.59999999999991px;height:12.5px;background:#dfe5fd;"></div>
<div style="left:1646.0px;top:553.9px;width:4px;height:11.3px;background:#808080;"></div>
<div style="left:1657px;top:553.3px;width:35.40000000000009px;height:12.5px;background:#dfe5fd;"></div>
<div style="left:1687.8000000000002px;top:553.9px;width:4px;height:11.3px;background:#808080;"></div>
<div style="left:1697.2px;top:553.3px;width:38.399999999999864px;height:12.5px;background:#dfe5fd;"></div>
<div style="left:1731.0px;top:553.9px;width:4px;height:11.3px;background:#808080;"></div>
<div style="left:1763.2px;top:553.3px;width:65.29999999999995px;height:12.5px;background:#dfe5fd;"></div>
<div style="left:1823.9px;top:553.9px;width:4px;height:11.3px;background:#808080;"></div>
<div style="left:1225px;top:568.3px;width:134.5px;height:12.5px;background:#dfe5fd;"></div>
<div style="left:1354.9px;top:568.9px;width:4px;height:11.3px;background:#808080;"></div>
<div style="left:1367.2px;top:568.3px;width:217.39999999999986px;height:12.5px;background:#dfe5fd;"></div>
<div style="left:1580.0px;top:568.9px;width:4px;height:11.3px;background:#808080;"></div>
<div style="left:1610px;top:568.3px;width:40.59999999999991px;height:12.5px;background:#dfe5fd;"></div>
<div style="left:1646.0px;top:568.9px;width:4px;height:11.3px;background:#808080;"></div>
<div style="left:1657px;top:568.3px;width:35.40000000000009px;height:12.5px;background:#dfe5fd;"></div>
<div style="left:1687.8000000000002px;top:568.9px;width:4px;height:11.3px;background:#808080;"></div>
<div style="left:1697.2px;top:568.3px;width:38.399999999999864px;height:12.5px;background:#dfe5fd;"></div>
<div style="left:1731.0px;top:568.9px;width:4px;height:11.3px;background:#808080;"></div>
<div style="left:1763.2px;top:568.3px;width:65.29999999999995px;height:12.5px;background:#dfe5fd;"></div>
<div style="left:1823.9px;top:568.9px;width:4px;height:11.3px;background:#808080;"></div>
<div style="left:1225px;top:583.3px;width:134.5px;height:12.5px;background:#dfe5fd;"></div>
<div style="left:1354.9px;top:583.9px;width:4px;height:11.3px;background:#808080;"></div>
<div style="left:1367.2px;top:583.3px;width:217.39999999999986px;height:12.5px;background:#dfe5fd;"></div>
<div style="left:1580.0px;top:583.9px;width:4px;height:11.3px;background:#808080;"></div>
<div style="left:1610px;top:583.3px;width:40.59999999999991px;height:12.5px;background:#dfe5fd;"></div>
<div style="left:1646.0px;top:583.9px;width:4px;height:11.3px;background:#808080;"></div>
<div style="left:1657px;top:583.3px;width:35.40000000000009px;height:12.5px;background:#dfe5fd;"></div>
<div style="left:1687.8000000000002px;top:583.9px;width:4px;height:11.3px;background:#808080;"></div>
<div style="left:1697.2px;top:583.3px;width:38.399999999999864px;height:12.5px;background:#dfe5fd;"></div>
<div style="left:1731.0px;top:583.9px;width:4px;height:11.3px;background:#808080;"></div>
<div style="left:1763.2px;top:583.3px;width:65.29999999999995px;height:12.5px;background:#dfe5fd;"></div>
<div style="left:1823.9px;top:583.9px;width:4px;height:11.3px;background:#808080;"></div>
<div style="left:1225px;top:598.3px;width:134.5px;height:12.5px;background:#dfe5fd;"></div>
<div style="left:1354.9px;top:598.9px;width:4px;height:11.3px;background:#808080;"></div>
<div style="left:1367.2px;top:598.3px;width:217.39999999999986px;height:12.5px;background:#dfe5fd;"></div>
<div style="left:1580.0px;top:598.9px;width:4px;height:11.3px;background:#808080;"></div>
<div style="left:1610px;top:598.3px;width:40.59999999999991px;height:12.5px;background:#dfe5fd;"></div>
<div style="left:1646.0px;top:598.9px;width:4px;height:11.3px;background:#808080;"></div>
<div style="left:1657px;top:598.3px;width:35.40000000000009px;height:12.5px;background:#dfe5fd;"></div>
<div style="left:1687.8000000000002px;top:598.9px;width:4px;height:11.3px;background:#808080;"></div>
<div style="left:1697.2px;top:598.3px;width:38.399999999999864px;height:12.5px;background:#dfe5fd;"></div>
<div style="left:1731.0px;top:598.9px;width:4px;height:11.3px;background:#808080;"></div>
<div style="left:1763.2px;top:598.3px;width:65.29999999999995px;height:12.5px;background:#dfe5fd;"></div>
<div style="left:1823.9px;top:598.9px;width:4px;height:11.3px;background:#808080;"></div>
<div style="left:1225px;top:613.3px;width:134.5px;height:12.5px;background:#dfe5fd;"></div>
<div style="left:1354.9px;top:613.9px;width:4px;height:11.3px;background:#808080;"></div>
<div style="left:1367.2px;top:613.3px;width:217.39999999999986px;height:12.5px;background:#dfe5fd;"></div>
<div style="left:1580.0px;top:613.9px;width:4px;height:11.3px;background:#808080;"></div>
<div style="left:1610px;top:613.3px;width:40.59999999999991px;height:12.5px;background:#dfe5fd;"></div>
<div style="left:1646.0px;top:613.9px;width:4px;height:11.3px;background:#808080;"></div>
<div style="left:1657px;top:613.3px;width:35.40000000000009px;height:12.5px;background:#dfe5fd;"></div>
<div style="left:1687.8000000000002px;top:613.9px;width:4px;height:11.3px;background:#808080;"></div>
<div style="left:1697.2px;top:613.3px;width:38.399999999999864px;height:12.5px;background:#dfe5fd;"></div>
<div style="left:1731.0px;top:613.9px;width:4px;height:11.3px;background:#808080;"></div>
<div style="left:1763.2px;top:613.3px;width:65.29999999999995px;height:12.5px;background:#dfe5fd;"></div>
<div style="left:1823.9px;top:613.9px;width:4px;height:11.3px;background:#808080;"></div>
<div style="left:1225px;top:628.3px;width:134.5px;height:12.5px;background:#dfe5fd;"></div>
<div style="left:1354.9px;top:628.9px;width:4px;height:11.3px;background:#808080;"></div>
<div style="left:1367.2px;top:628.3px;width:217.39999999999986px;height:12.5px;background:#dfe5fd;"></div>
<div style="left:1580.0px;top:628.9px;width:4px;height:11.3px;background:#808080;"></div>
<div style="left:1610px;top:628.3px;width:40.59999999999991px;height:12.5px;background:#dfe5fd;"></div>
<div style="left:1646.0px;top:628.9px;width:4px;height:11.3px;background:#808080;"></div>
<div style="left:1657px;top:628.3px;width:35.40000000000009px;height:12.5px;background:#dfe5fd;"></div>
<div style="left:1687.8000000000002px;top:628.9px;width:4px;height:11.3px;background:#808080;"></div>
<div style="left:1697.2px;top:628.3px;width:38.399999999999864px;height:12.5px;background:#dfe5fd;"></div>
<div style="left:1731.0px;top:628.9px;width:4px;height:11.3px;background:#808080;"></div>
<div style="left:1763.2px;top:628.3px;width:65.29999999999995px;height:12.5px;background:#dfe5fd;"></div>
<div style="left:1823.9px;top:628.9px;width:4px;height:11.3px;background:#808080;"></div>
<div style="left:1225px;top:643.3px;width:134.5px;height:12.5px;background:#dfe5fd;"></div>
<div style="left:1354.9px;top:643.9px;width:4px;height:11.3px;background:#808080;"></div>
<div style="left:1367.2px;top:643.3px;width:217.39999999999986px;height:12.5px;background:#dfe5fd;"></div>
<div style="left:1580.0px;top:643.9px;width:4px;height:11.3px;background:#808080;"></div>
<div style="left:1610px;top:643.3px;width:40.59999999999991px;height:12.5px;background:#dfe5fd;"></div>
<div style="left:1646.0px;top:643.9px;width:4px;height:11.3px;background:#808080;"></div>
<div style="left:1657px;top:643.3px;width:35.40000000000009px;height:12.5px;background:#dfe5fd;"></div>
<div style="left:1687.8000000000002px;top:643.9px;width:4px;height:11.3px;background:#808080;"></div>
<div style="left:1697.2px;top:643.3px;width:38.399999999999864px;height:12.5px;background:#dfe5fd;"></div>
<div style="left:1731.0px;top:643.9px;width:4px;height:11.3px;background:#808080;"></div>
<div style="left:1763.2px;top:643.3px;width:65.29999999999995px;height:12.5px;background:#dfe5fd;"></div>
<div style="left:1823.9px;top:643.9px;width:4px;height:11.3px;background:#808080;"></div>
<div style="left:1225px;top:658.3px;width:134.5px;height:12.5px;background:#dfe5fd;"></div>
<div style="left:1354.9px;top:658.9px;width:4px;height:11.3px;background:#808080;"></div>
<div style="left:1367.2px;top:658.3px;width:217.39999999999986px;height:12.5px;background:#dfe5fd;"></div>
<div style="left:1580.0px;top:658.9px;width:4px;height:11.3px;background:#808080;"></div>
<div style="left:1610px;top:658.3px;width:40.59999999999991px;height:12.5px;background:#dfe5fd;"></div>
<div style="left:1646.0px;top:658.9px;width:4px;height:11.3px;background:#808080;"></div>
<div style="left:1657px;top:658.3px;width:35.40000000000009px;height:12.5px;background:#dfe5fd;"></div>
<div style="left:1687.8000000000002px;top:658.9px;width:4px;height:11.3px;background:#808080;"></div>
<div style="left:1697.2px;top:658.3px;width:38.399999999999864px;height:12.5px;background:#dfe5fd;"></div>
<div style="left:1731.0px;top:658.9px;width:4px;height:11.3px;background:#808080;"></div>
<div style="left:1763.2px;top:658.3px;width:65.29999999999995px;height:12.5px;background:#dfe5fd;"></div>
<div style="left:1823.9px;top:658.9px;width:4px;height:11.3px;background:#808080;"></div>
<div style="left:1225px;top:673.3px;width:134.5px;height:12.5px;background:#dfe5fd;"></div>
<div style="left:1354.9px;top:673.9px;width:4px;height:11.3px;background:#808080;"></div>
<div style="left:1367.2px;top:673.3px;width:217.39999999999986px;height:12.5px;background:#dfe5fd;"></div>
<div style="left:1580.0px;top:673.9px;width:4px;height:11.3px;background:#808080;"></div>
<div style="left:1610px;top:673.3px;width:40.59999999999991px;height:12.5px;background:#dfe5fd;"></div>
<div style="left:1646.0px;top:673.9px;width:4px;height:11.3px;background:#808080;"></div>
<div style="left:1657px;top:673.3px;width:35.40000000000009px;height:12.5px;background:#dfe5fd;"></div>
<div style="left:1687.8000000000002px;top:673.9px;width:4px;height:11.3px;background:#808080;"></div>
<div style="left:1697.2px;top:673.3px;width:38.399999999999864px;height:12.5px;background:#dfe5fd;"></div>
<div style="left:1731.0px;top:673.9px;width:4px;height:11.3px;background:#808080;"></div>
<div style="left:1763.2px;top:673.3px;width:65.29999999999995px;height:12.5px;background:#dfe5fd;"></div>
<div style="left:1823.9px;top:673.9px;width:4px;height:11.3px;background:#808080;"></div>
<div style="left:1225px;top:688.3px;width:134.5px;height:12.5px;background:#dfe5fd;"></div>
<div style="left:1354.9px;top:688.9px;width:4px;height:11.3px;background:#808080;"></div>
<div style="left:1367.2px;top:688.3px;width:217.39999999999986px;height:12.5px;background:#dfe5fd;"></div>
<div style="left:1580.0px;top:688.9px;width:4px;height:11.3px;background:#808080;"></div>
<div style="left:1610px;top:688.3px;width:40.59999999999991px;height:12.5px;background:#dfe5fd;"></div>
<div style="left:1646.0px;top:688.9px;width:4px;height:11.3px;background:#808080;"></div>
<div style="left:1657px;top:688.3px;width:35.40000000000009px;height:12.5px;background:#dfe5fd;"></div>
<div style="left:1687.8000000000002px;top:688.9px;width:4px;height:11.3px;background:#808080;"></div>
<div style="left:1697.2px;top:688.3px;width:38.399999999999864px;height:12.5px;background:#dfe5fd;"></div>
<div style="left:1731.0px;top:688.9px;width:4px;height:11.3px;background:#808080;"></div>
<div style="left:1763.2px;top:688.3px;width:65.29999999999995px;height:12.5px;background:#dfe5fd;"></div>
<div style="left:1823.9px;top:688.9px;width:4px;height:11.3px;background:#808080;"></div>
<div style="left:1225px;top:703.3px;width:134.5px;height:12.5px;background:#dfe5fd;"></div>
<div style="left:1354.9px;top:703.9px;width:4px;height:11.3px;background:#808080;"></div>
<div style="left:1367.2px;top:703.3px;width:217.39999999999986px;height:12.5px;background:#dfe5fd;"></div>
<div style="left:1580.0px;top:703.9px;width:4px;height:11.3px;background:#808080;"></div>
<div style="left:1610px;top:703.3px;width:40.59999999999991px;height:12.5px;background:#dfe5fd;"></div>
<div style="left:1646.0px;top:703.9px;width:4px;height:11.3px;background:#808080;"></div>
<div style="left:1657px;top:703.3px;width:35.40000000000009px;height:12.5px;background:#dfe5fd;"></div>
<div style="left:1687.8000000000002px;top:703.9px;width:4px;height:11.3px;background:#808080;"></div>
<div style="left:1697.2px;top:703.3px;width:38.399999999999864px;height:12.5px;background:#dfe5fd;"></div>
<div style="left:1731.0px;top:703.9px;width:4px;height:11.3px;background:#808080;"></div>
<div style="left:1763.2px;top:703.3px;width:65.29999999999995px;height:12.5px;background:#dfe5fd;"></div>
<div style="left:1823.9px;top:703.9px;width:4px;height:11.3px;background:#808080;"></div>
<div style="left:1225px;top:718.3px;width:134.5px;height:12.5px;background:#dfe5fd;"></div>
<div style="left:1354.9px;top:718.9px;width:4px;height:11.3px;background:#808080;"></div>
<div style="left:1367.2px;top:718.3px;width:217.39999999999986px;height:12.5px;background:#dfe5fd;"></div>
<div style="left:1580.0px;top:718.9px;width:4px;height:11.3px;background:#808080;"></div>
<div style="left:1610px;top:718.3px;width:40.59999999999991px;height:12.5px;background:#dfe5fd;"></div>
<div style="left:1646.0px;top:718.9px;width:4px;height:11.3px;background:#808080;"></div>
<div style="left:1657px;top:718.3px;width:35.40000000000009px;height:12.5px;background:#dfe5fd;"></div>
<div style="left:1687.8000000000002px;top:718.9px;width:4px;height:11.3px;background:#808080;"></div>
<div style="left:1697.2px;top:718.3px;width:38.399999999999864px;height:12.5px;background:#dfe5fd;"></div>
<div style="left:1731.0px;top:718.9px;width:4px;height:11.3px;background:#808080;"></div>
<div style="left:1763.2px;top:718.3px;width:65.29999999999995px;height:12.5px;background:#dfe5fd;"></div>
<div style="left:1823.9px;top:718.9px;width:4px;height:11.3px;background:#808080;"></div>
<div style="left:1225px;top:733.3px;width:134.5px;height:12.5px;background:#dfe5fd;"></div>
<div style="left:1354.9px;top:733.9px;width:4px;height:11.3px;background:#808080;"></div>
<div style="left:1367.2px;top:733.3px;width:217.39999999999986px;height:12.5px;background:#dfe5fd;"></div>
<div style="left:1580.0px;top:733.9px;width:4px;height:11.3px;background:#808080;"></div>
<div style="left:1610px;top:733.3px;width:40.59999999999991px;height:12.5px;background:#dfe5fd;"></div>
<div style="left:1646.0px;top:733.9px;width:4px;height:11.3px;background:#808080;"></div>
<div style="left:1657px;top:733.3px;width:35.40000000000009px;height:12.5px;background:#dfe5fd;"></div>
<div style="left:1687.8000000000002px;top:733.9px;width:4px;height:11.3px;background:#808080;"></div>
<div style="left:1697.2px;top:733.3px;width:38.399999999999864px;height:12.5px;background:#dfe5fd;"></div>
<div style="left:1731.0px;top:733.9px;width:4px;height:11.3px;background:#808080;"></div>
<div style="left:1763.2px;top:733.3px;width:65.29999999999995px;height:12.5px;background:#dfe5fd;"></div>
<div style="left:1823.9px;top:733.9px;width:4px;height:11.3px;background:#808080;"></div>
<div style="left:1225px;top:748.3px;width:134.5px;height:12.5px;background:#dfe5fd;"></div>
<div style="left:1354.9px;top:748.9px;width:4px;height:11.3px;background:#808080;"></div>
<div style="left:1367.2px;top:748.3px;width:217.39999999999986px;height:12.5px;background:#dfe5fd;"></div>
<div style="left:1580.0px;top:748.9px;width:4px;height:11.3px;background:#808080;"></div>
<div style="left:1610px;top:748.3px;width:40.59999999999991px;height:12.5px;background:#dfe5fd;"></div>
<div style="left:1646.0px;top:748.9px;width:4px;height:11.3px;background:#808080;"></div>
<div style="left:1657px;top:748.3px;width:35.40000000000009px;height:12.5px;background:#dfe5fd;"></div>
<div style="left:1687.8000000000002px;top:748.9px;width:4px;height:11.3px;background:#808080;"></div>
<div style="left:1697.2px;top:748.3px;width:38.399999999999864px;height:12.5px;background:#dfe5fd;"></div>
<div style="left:1731.0px;top:748.9px;width:4px;height:11.3px;background:#808080;"></div>
<div style="left:1763.2px;top:748.3px;width:65.29999999999995px;height:12.5px;background:#dfe5fd;"></div>
<div style="left:1823.9px;top:748.9px;width:4px;height:11.3px;background:#808080;"></div>
<div style="left:1225px;top:763.3px;width:134.5px;height:12.5px;background:#dfe5fd;"></div>
<div style="left:1354.9px;top:763.9px;width:4px;height:11.3px;background:#808080;"></div>
<div style="left:1367.2px;top:763.3px;width:217.39999999999986px;height:12.5px;background:#dfe5fd;"></div>
<div style="left:1580.0px;top:763.9px;width:4px;height:11.3px;background:#808080;"></div>
<div style="left:1610px;top:763.3px;width:40.59999999999991px;height:12.5px;background:#dfe5fd;"></div>
<div style="left:1646.0px;top:763.9px;width:4px;height:11.3px;background:#808080;"></div>
<div style="left:1657px;top:763.3px;width:35.40000000000009px;height:12.5px;background:#dfe5fd;"></div>
<div style="left:1687.8000000000002px;top:763.9px;width:4px;height:11.3px;background:#808080;"></div>
<div style="left:1697.2px;top:763.3px;width:38.399999999999864px;height:12.5px;background:#dfe5fd;"></div>
<div style="left:1731.0px;top:763.9px;width:4px;height:11.3px;background:#808080;"></div>
<div style="left:1763.2px;top:763.3px;width:65.29999999999995px;height:12.5px;background:#dfe5fd;"></div>
<div style="left:1823.9px;top:763.9px;width:4px;height:11.3px;background:#808080;"></div>
<span class="t" id="t103" style="left:1228px;top:541.95px;font-size:7.5px;line-height:7.5px;color:#4d4d4d;letter-spacing:0.178px;">445566</span>
<span class="t" id="t104" style="left:1370.2px;top:541.95px;font-size:7.5px;line-height:7.5px;color:#4d4d4d;letter-spacing:0.189px;">Absolut Vodka 12x 70 cl</span>
<span class="t" id="t105" style="left:1612.8px;top:541.95px;font-size:7.5px;line-height:7.5px;color:#4d4d4d;letter-spacing:0.328px;">24</span>
<span class="t" id="t106" style="left:1659.6px;top:541.95px;font-size:7.5px;line-height:7.5px;color:#4d4d4d;letter-spacing:0.078px;">st</span>
<span class="t" id="t107" style="left:1700.9px;top:541.95px;font-size:7.5px;line-height:7.5px;color:#4d4d4d;letter-spacing:0.091px;">192.02</span>
<span class="t" id="t108" style="left:1766.2px;top:541.95px;font-size:7.5px;line-height:7.5px;color:#4d4d4d;letter-spacing:0.196px;">4608.48</span>
<span class="t" id="t109" style="left:1228px;top:556.95px;font-size:7.5px;line-height:7.5px;color:#4d4d4d;letter-spacing:0.178px;">445567</span>
<span class="t" id="t110" style="left:1370.2px;top:556.95px;font-size:7.5px;line-height:7.5px;color:#4d4d4d;letter-spacing:0.184px;">Beefeater Gin 6x70 cl</span>
<span class="t" id="t111" style="left:1612.8px;top:556.95px;font-size:7.5px;line-height:7.5px;color:#4d4d4d;">6</span>
<span class="t" id="t112" style="left:1659.6px;top:556.95px;font-size:7.5px;line-height:7.5px;color:#4d4d4d;letter-spacing:0.078px;">st</span>
<span class="t" id="t113" style="left:1700.9px;top:556.95px;font-size:7.5px;line-height:7.5px;color:#4d4d4d;letter-spacing:0.091px;">195.71</span>
<span class="t" id="t114" style="left:1766.2px;top:556.95px;font-size:7.5px;line-height:7.5px;color:#4d4d4d;letter-spacing:0.134px;">1174.26</span>
<span class="t" id="t115" style="left:1228px;top:571.95px;font-size:7.5px;line-height:7.5px;color:#4d4d4d;letter-spacing:0.178px;">123456</span>
<span class="t" id="t116" style="left:1370.2px;top:571.95px;font-size:7.5px;line-height:7.5px;color:#4d4d4d;letter-spacing:0.170px;">Tonic Water</span>
<span class="t" id="t117" style="left:1612.8px;top:571.95px;font-size:7.5px;line-height:7.5px;color:#4d4d4d;letter-spacing:0.328px;">48</span>
<span class="t" id="t118" style="left:1659.6px;top:571.95px;font-size:7.5px;line-height:7.5px;color:#4d4d4d;letter-spacing:0.151px;">flaska</span>
<span class="t" id="t119" style="left:1700.9px;top:571.95px;font-size:7.5px;line-height:7.5px;color:#4d4d4d;letter-spacing:0.064px;">12.00</span>
<span class="t" id="t120" style="left:1766.2px;top:571.95px;font-size:7.5px;line-height:7.5px;color:#4d4d4d;letter-spacing:0.161px;">576</span>
<div style="left:1195.3px;top:817.4px;width:662px;height:140px;background:#fff;border-radius:3.5px;"></div>
<span class="t" id="t121" style="left:1221.4px;top:835.92px;font-size:12.5px;line-height:12.5px;color:#595959;font-weight:700;letter-spacing:0.416px;">Momsunderlag</span>
<span class="t" id="t122" style="left:1221.4px;top:855.26px;font-size:9.5px;line-height:9.5px;color:#2b2b2b;letter-spacing:0.223px;">Moms 25%</span>
<div style="left:1394px;top:849.1px;width:72.7px;height:15.5px;background:#dfe5fd;"></div>
<div style="left:1462.1000000000001px;top:849.7px;width:4px;height:14.3px;background:#808080;"></div>
<span class="t" id="t123" style="left:1398px;top:853.58px;font-size:9px;line-height:9px;color:#222;letter-spacing:0.236px;">1589.69</span>
<span class="t" id="t124" style="left:1221.4px;top:871.26px;font-size:9.5px;line-height:9.5px;color:#2b2b2b;letter-spacing:0.223px;">Moms 16%</span>
<div style="left:1394px;top:866.5px;width:72.7px;height:15.5px;background:#dfe5fd;"></div>
<div style="left:1462.1000000000001px;top:867.1px;width:4px;height:14.3px;background:#808080;"></div>
<span class="t" id="t125" style="left:1398px;top:870.98px;font-size:9px;line-height:9px;color:#222;">0</span>
<span class="t" id="t126" style="left:1221.4px;top:887.26px;font-size:9.5px;line-height:9.5px;color:#2b2b2b;letter-spacing:0.138px;">Moms 6%</span>
<div style="left:1394px;top:883.9px;width:72.7px;height:15.5px;background:#dfe5fd;"></div>
<div style="left:1462.1000000000001px;top:884.5px;width:4px;height:14.3px;background:#808080;"></div>
<span class="t" id="t127" style="left:1398px;top:888.38px;font-size:9px;line-height:9px;color:#222;">0</span>
<span class="t" id="t128" style="left:1221.4px;top:903.26px;font-size:9.5px;line-height:9.5px;color:#2b2b2b;letter-spacing:0.460px;">Momsfritt</span>
<div style="left:1394px;top:901.3000000000001px;width:72.7px;height:15.5px;background:#dfe5fd;"></div>
<div style="left:1462.1000000000001px;top:901.9000000000001px;width:4px;height:14.3px;background:#808080;"></div>
<span class="t" id="t129" style="left:1398px;top:905.78px;font-size:9px;line-height:9px;color:#222;">0</span>
<span class="t" id="t130" style="left:1635.5px;top:837.16px;font-size:9.5px;line-height:9.5px;color:#2b2b2b;letter-spacing:0.175px;">Expeditionsavgift</span>
<span class="t" id="t131" style="left:1635.5px;top:853.16px;font-size:9.5px;line-height:9.5px;color:#2b2b2b;letter-spacing:0.092px;">Frakt</span>
<span class="t" id="t132" style="left:1635.5px;top:869.16px;font-size:9.5px;line-height:9.5px;color:#2b2b2b;letter-spacing:0.332px;">Belopp före moms</span>
<span class="t" id="t133" style="left:1635.5px;top:885.16px;font-size:9.5px;line-height:9.5px;color:#2b2b2b;letter-spacing:0.332px;">Total moms</span>
<span class="t" id="t134" style="left:1635.5px;top:901.16px;font-size:9.5px;line-height:9.5px;color:#2b2b2b;letter-spacing:0.301px;">Öresutjämning</span>
<div style="left:1759.8px;top:837.0px;width:72.2px;height:14.5px;background:#dfe5fd;"></div>
<div style="left:1827.4px;top:837.6px;width:4px;height:13.3px;background:#808080;"></div>
<span class="t" id="t135" style="left:1762.8px;top:841.08px;font-size:9px;line-height:9px;color:#222;">0</span>
<div style="left:1759.8px;top:854.4px;width:72.2px;height:14.5px;background:#dfe5fd;"></div>
<div style="left:1827.4px;top:855.0px;width:4px;height:13.3px;background:#808080;"></div>
<span class="t" id="t136" style="left:1762.8px;top:858.48px;font-size:9px;line-height:9px;color:#222;">0</span>
<div style="left:1759.8px;top:871.8px;width:72.2px;height:14.5px;background:#dfe5fd;"></div>
<div style="left:1827.4px;top:872.4px;width:4px;height:13.3px;background:#808080;"></div>
<span class="t" id="t137" style="left:1762.8px;top:875.88px;font-size:9px;line-height:9px;color:#222;letter-spacing:0.350px;">6358.74</span>
<div style="left:1759.8px;top:889.2px;width:72.2px;height:14.5px;background:#dfe5fd;"></div>
<div style="left:1827.4px;top:889.8000000000001px;width:4px;height:13.3px;background:#808080;"></div>
<span class="t" id="t138" style="left:1762.8px;top:893.28px;font-size:9px;line-height:9px;color:#222;">0</span>
<div style="left:1891px;top:68px;width:4px;height:843px;background:#f1f1f1;"></div>
<div style="left:1891px;top:68px;width:4px;height:169px;background:#8a8a8a;"></div>
</div></div>
<div style="left:1158px;top:911px;width:733px;height:9px;background:#f1f1f1;"></div>
<div style="left:1891px;top:911px;width:4px;height:9px;background:#fff;"></div>
<div style="left:1158px;top:911px;width:729px;height:9px;background:#888;"></div>
<div style="left:1144px;top:930px;width:766px;height:35.8px;background:#fdfefb;"></div>
<svg class="i" style="left:1163.8px;top:936.0px;" width="24" height="24" viewBox="0 0 24 24"><path fill="#43483e" d="M19 12v7H5v-7H3v7c0 1.1.9 2 2 2h14c1.1 0 2-.9 2-2v-7h-2zm-6 .67l2.59-2.58L17 11.5l-5 5-5-5 1.41-1.41L11 12.67V3h2z"/></svg>
<svg class="i" style="left:1199.4px;top:936.0px;" width="24" height="24" viewBox="0 0 24 24"><path fill="#43483e" d="M15.5 14h-.79l-.28-.27C15.41 12.59 16 11.11 16 9.5 16 5.91 13.09 3 9.5 3S3 5.91 3 9.5 5.91 16 9.5 16c1.61 0 3.09-.59 4.23-1.57l.27.28v.79l5 4.99L20.49 19l-4.99-5zm-6 0C7.01 14 5 11.99 5 9.5S7.01 5 9.5 5 14 7.01 14 9.5 11.99 14 9.5 14zm2.5-4h-2v2H9v-2H7V9h2V7h1v2h2v1z"/></svg>
<svg class="i" style="left:1235.5px;top:936.0px;" width="24" height="24" viewBox="0 0 24 24"><path fill="#43483e" d="M15.5 14h-.79l-.28-.27C15.41 12.59 16 11.11 16 9.5 16 5.91 13.09 3 9.5 3S3 5.91 3 9.5 5.91 16 9.5 16c1.61 0 3.09-.59 4.23-1.57l.27.28v.79l5 4.99L20.49 19l-4.99-5zm-6 0C7.01 14 5 11.99 5 9.5S7.01 5 9.5 5 14 7.01 14 9.5 11.99 14 9.5 14zM7 9h5v1H7z"/></svg>
<svg class="i" style="left:1272.2px;top:936.0px;" width="24" height="24" viewBox="0 0 24 24"><path fill="#43483e" d="M18.4 10.6C16.55 8.99 14.15 8 11.5 8c-4.65 0-8.58 3.03-9.96 7.22L3.9 16c1.05-3.19 4.05-5.5 7.6-5.5 1.95 0 3.73.72 5.12 1.88L13 16h9V7l-3.6 3.6z"/></svg>
<svg class="i" style="left:1308.0px;top:936.0px;" width="24" height="24" viewBox="0 0 24 24"><path fill="#43483e" d="M12.5 8c-2.65 0-5.05.99-6.9 2.6L2 7v9h9l-3.62-3.62c1.39-1.16 3.16-1.88 5.12-1.88 3.54 0 6.55 2.31 7.6 5.5l2.37-.78C21.08 11.03 17.15 8 12.5 8z"/></svg>
<svg class="i" style="left:1344.0px;top:936.0px;" width="24" height="24" viewBox="0 0 24 24"><path fill="#9a9d95" d="M15.41 7.41L14 6l-6 6 6 6 1.41-1.41L10.83 12z"/></svg>
<span class="t" id="t139" style="left:1374px;top:939.96px;font-size:16px;line-height:16px;color:#43483e;letter-spacing:-0.628px;">1 / 4</span>
<svg class="i" style="left:1408.6px;top:936.0px;" width="24" height="24" viewBox="0 0 24 24"><path fill="#43483e" d="M10 6L8.59 7.41 13.17 12l-4.58 4.59L10 18l6-6z"/></svg>
</body></html>
